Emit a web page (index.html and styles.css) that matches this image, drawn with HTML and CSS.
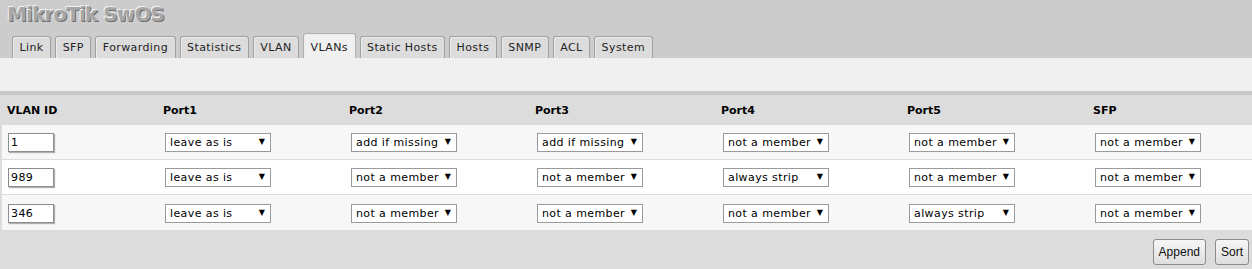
FILE: index.html
```html
<!DOCTYPE html>
<html>
<head>
<meta charset="utf-8">
<link rel="stylesheet" href="styles.css">
</head>
<body>
<div class="top">
  <div class="title">MikroTik SwOS</div>
  <div class="tabs">
    <span class="tab">Link</span>
    <span class="tab">SFP</span>
    <span class="tab">Forwarding</span>
    <span class="tab">Statistics</span>
    <span class="tab">VLAN</span>
    <span class="tab active">VLANs</span>
    <span class="tab">Static Hosts</span>
    <span class="tab">Hosts</span>
    <span class="tab">SNMP</span>
    <span class="tab">ACL</span>
    <span class="tab">System</span>
  </div>
</div>
<div class="band"></div>
<div class="strip"></div>
<div class="content">
  <div class="row head">
    <div class="cell">VLAN ID</div>
    <div class="cell">Port1</div>
    <div class="cell">Port2</div>
    <div class="cell">Port3</div>
    <div class="cell">Port4</div>
    <div class="cell">Port5</div>
    <div class="cell">SFP</div>
  </div>
  <div class="row alt">
    <div class="cell"><span class="inp">1</span></div>
    <div class="cell"><span class="sel">leave as is<i>▼</i></span></div>
    <div class="cell"><span class="sel">add if missing<i>▼</i></span></div>
    <div class="cell"><span class="sel">add if missing<i>▼</i></span></div>
    <div class="cell"><span class="sel">not a member<i>▼</i></span></div>
    <div class="cell"><span class="sel">not a member<i>▼</i></span></div>
    <div class="cell"><span class="sel">not a member<i>▼</i></span></div>
  </div>
  <div class="row">
    <div class="cell"><span class="inp">989</span></div>
    <div class="cell"><span class="sel">leave as is<i>▼</i></span></div>
    <div class="cell"><span class="sel">not a member<i>▼</i></span></div>
    <div class="cell"><span class="sel">not a member<i>▼</i></span></div>
    <div class="cell"><span class="sel">always strip<i>▼</i></span></div>
    <div class="cell"><span class="sel">not a member<i>▼</i></span></div>
    <div class="cell"><span class="sel">not a member<i>▼</i></span></div>
  </div>
  <div class="row alt last">
    <div class="cell"><span class="inp">346</span></div>
    <div class="cell"><span class="sel">leave as is<i>▼</i></span></div>
    <div class="cell"><span class="sel">not a member<i>▼</i></span></div>
    <div class="cell"><span class="sel">not a member<i>▼</i></span></div>
    <div class="cell"><span class="sel">not a member<i>▼</i></span></div>
    <div class="cell"><span class="sel">always strip<i>▼</i></span></div>
    <div class="cell"><span class="sel">not a member<i>▼</i></span></div>
  </div>
  <div class="actions">
    <button class="btn">Append</button>
    <button class="btn">Sort</button>
  </div>
</div>
</body>
</html>
```
FILE: styles.css
```css
html, body {
  margin: 0;
  padding: 0;
  background: #dcdcdc;
  font-family: "DejaVu Sans", Verdana, sans-serif;
  font-size: 11px;
  letter-spacing: 0.4px;
  color: #000;
}
.top {
  background: #cccccc;
  height: 58px;
  display: flex;
  flex-direction: column;
}
.title {
  height: 33px;
  padding-left: 7px;
  font-size: 20px;
  font-weight: bold;
  line-height: 28px;
  color: #a6a6a6;
  letter-spacing: -0.9px;
  text-shadow: -1px -1px 0 #f4f4f4, 1px 1px 0 #6e6e6e;
}
.tabs {
  display: flex;
  align-items: flex-end;
  gap: 4px;
  padding-left: 12px;
  height: 25px;
}
.tab {
  box-sizing: border-box;
  height: 22px;
  padding: 0 6.5px;
  line-height: 21px;
  background: #dcdcdc;
  border: 1px solid #a0a0a0;
  border-bottom: none;
  border-radius: 3px 3px 0 0;
  color: #222;
  box-shadow: inset 1px 1px 0 #ececec;
}
.tab.active {
  height: 25px;
  line-height: 27px;
  background: #f0f0f0;
  border-color: #b0b0b0;
}
.band {
  height: 33px;
  background: #f0f0f0;
}
.strip {
  height: 4px;
  background: #c8c8c8;
}
.content {
  padding-left: 2px;
}
.row {
  display: grid;
  grid-template-columns: 156px repeat(5, 186px) 1fr;
  height: 35px;
  align-items: center;
  background: #ffffff;
  border-bottom: 1px solid #dcdcdc;
  box-sizing: border-box;
}
.row.alt { background: #f7f7f7; }
.row.last { border-bottom: none; }
.row.head {
  height: 30px;
  background: #dcdcdc;
  border-bottom: none;
  font-weight: bold;
  font-size: 11px;
  letter-spacing: 0;
  padding-top: 1px;
}
.cell {
  padding-left: 5px;
  white-space: nowrap;
}
.inp {
  display: inline-block;
  box-sizing: border-box;
  width: 46px;
  height: 19px;
  margin-left: 1px;
  margin-top: 1px;
  padding-left: 2px;
  line-height: 18px;
  background: #fff;
  border: 1px solid #8c8c8c;
  box-shadow: 1px 1px 1px #b0b0b0;
}
.sel {
  display: inline-block;
  position: relative;
  box-sizing: border-box;
  width: 106px;
  height: 19px;
  margin-left: 2px;
  margin-top: 1px;
  padding-left: 4px;
  line-height: 18px;
  background: #fff;
  border: 1px solid #9a9a9a;
}
.sel i {
  position: absolute;
  right: 5px;
  top: 0;
  font-style: normal;
  font-size: 8px;
  letter-spacing: 0;
  line-height: 15px;
}
.actions {
  display: flex;
  justify-content: flex-end;
  gap: 9px;
  padding: 9px 3px 0 0;
}
.btn {
  box-sizing: border-box;
  height: 26px;
  padding: 0 5px;
  font-family: "Liberation Sans", Arial, sans-serif;
  font-size: 12px;
  letter-spacing: 0;
  color: #111;
  background: linear-gradient(#f6f6f6, #dedede);
  border: 1px solid #8a8a8a;
  border-radius: 3px;
}
```
